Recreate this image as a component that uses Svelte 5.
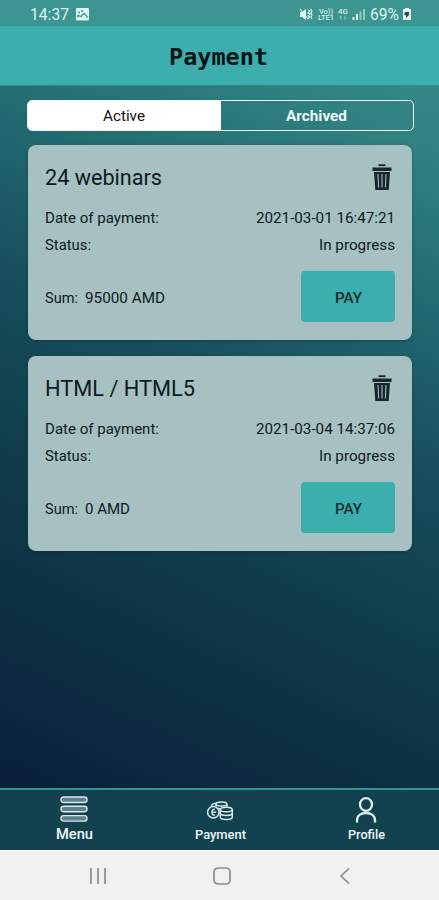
<script>
  const payments = [
    { title: '24 webinars', date: '2021-03-01 16:47:21', sum: '95000 AMD', titleWidth: 117, sumWidth: 80 },
    { title: 'HTML / HTML5', date: '2021-03-04 14:37:06', sum: '0 AMD', titleWidth: 150, sumWidth: 45 },
  ];
</script>

{#snippet label(text, width)}
  <svg class="label" style:width="{width}px" aria-label={text}>
    <text x="0" y="1em" textLength={width} lengthAdjust="spacingAndGlyphs">{text}</text>
  </svg>
{/snippet}

<div class="screen">
  <div class="status">
    <span class="time">{@render label('14:37', 39)}</span>
    <svg class="photo" width="13" height="13" viewBox="0 0 13 13">
      <rect width="13" height="12.5" rx="1" fill="#dff5f1" />
      <path d="M2 9.5V7.5l3 1 3-3 3 3v1.2M2 4.5h2M5 3h2" fill="none" stroke="#3c9490" stroke-width="1.3" />
    </svg>
    <svg class="signals" width="69" height="15" viewBox="0 0 69 15">
      <path d="M1 5h2l4-3v11l-4-3H1z" fill="#e4f6f3" />
      <path d="M1 2l8 10M9 3l2 1-2 2 2 1-2 2 2 1-2 2M12 2l1 2-1 2 1 2-1 2 1 2" fill="none" stroke="#dcf3f0" stroke-width="1.1" />
      <g fill="#d3edea" font-weight="500" font-size="6.3">
        <text x="20" y="6.7" textLength="14" lengthAdjust="spacingAndGlyphs">Vo))</text>
        <text x="19" y="13" textLength="16" lengthAdjust="spacingAndGlyphs">LTE1</text>
        <text x="39" y="6.7" textLength="10" lengthAdjust="spacingAndGlyphs">4G</text>
      </g>
      <path d="M42 13V9l-1.5 1.5M46 8.5v4l1.5-1.5" fill="none" stroke="#91c9c3" />
      <path d="M54.5 13v-3M58 13V7" stroke="#e6f5f2" stroke-width="2" />
      <path d="M61.5 13V4.500M65 13V2" stroke="#91c7c2" stroke-width="2" />
    </svg>
    <span class="percent">{@render label('69%', 29)}</span>
    <svg class="battery" width="10" height="13" viewBox="0 0 10 13">
      <path d="M3 0h4v1h2v11H1V1h2z" fill="#e2f6f3" />
      <path d="M3 4h4v3L4 10V7H2z" fill="#254f50" />
    </svg>
  </div>

  <header><h1>{@render label('Payment', 99)}</h1></header>

  <main>
    <div class="tabs">
      <button class="tab active">{@render label('Active', 42)}</button>
      <button class="tab">{@render label('Archived', 61)}</button>
    </div>
    {#each payments as payment}
      <section class="card">
        <div class="title-row">
          <h2>{@render label(payment.title, payment.titleWidth)}</h2>
          <svg class="trash" width="20" height="27" viewBox="0 0 20 27">
            <path d="M6.500 1.200h7" fill="none" stroke="#17252f" stroke-width="1.800" />
            <path d="M0.500 3.600h19v3.400H0.500zM2 8h16l-1.300 18H3.300z" fill="#17252f" />
            <path d="M6 10l.6 13.500M10 10v13.500M14 10l-.6 13.500" stroke="#94aeb2" stroke-width="1.200" />
          </svg>
        </div>
        <div class="detail">
          {@render label('Date of payment:', 114)}
          {@render label(payment.date, 139)}
        </div>
        <div class="detail">
          {@render label('Status:', 46)}
          {@render label('In progress', 76)}
        </div>
        <div class="sum-row">
          <div class="sum">{@render label('Sum:', 33)}{@render label(payment.sum, payment.sumWidth)}</div>
          <button class="pay">{@render label('PAY', 27)}</button>
        </div>
      </section>
    {/each}
  </main>

  <nav class="tabbar">
    <a class="item menu" href="#menu">
      <svg width="28" height="27" viewBox="0 0 28 27" fill="#5c7f8b" stroke="#d9e8ed" stroke-width="1.400">
        <rect x="1" y="1" width="26" height="5.500" rx="2.700" />
        <rect x="1" y="10.300" width="26" height="5.500" rx="2.700" />
        <rect x="1" y="19.600" width="26" height="5.500" rx="2.700" />
      </svg>
      {@render label('Menu', 37)}
    </a>
    <a class="item" href="#payment">
      <svg width="28" height="27" viewBox="0 0 28 27" fill="none" stroke="#d9e9ed" stroke-width="1.500">
        <circle cx="7.300" cy="16.300" r="5.700" />
        <path d="M8.800 13.300c-3.800 0-3.800 6 0 6M7.300 16.300h3M5 9.800C6.500 7.800 8 7.300 10 7.300" />
        <path d="M10 10.500V8.200c0-3 11-3 11 0v2.600M10 8.200c0 2.300 11 2.300 11 0M11.500 12c1 .7 2 .9 3 .9" />
        <path fill="#12424f" d="M14.300 13.800v7.200c0 3.400 12 3.400 12 0v-7.200c0-3.300-12-3.300-12 0z" />
        <path d="M14.300 13.800c0 2.700 12 2.700 12 0M14.300 17.300c0 2.800 12 2.800 12 0" />
      </svg>
      {@render label('Payment', 51)}
    </a>
    <a class="item" href="#profile">
      <svg width="28" height="27" viewBox="0 0 28 27" fill="none" stroke="#e0edf1" stroke-width="2.300">
        <ellipse cx="14" cy="8.500" rx="6" ry="6.300" />
        <path d="M5 26.500v-2c0-5 4-7.500 9-7.500s9 2.500 9 7.500v2" />
      </svg>
      {@render label('Profile', 37)}
    </a>
  </nav>

  <div class="system">
    <svg width="18" height="18" viewBox="0 0 18 18"><path d="M2 1v16M9 1v16M16 1v16" /></svg>
    <svg width="18" height="18" viewBox="0 0 18 18"><rect x="1" y="1" width="16" height="16" rx="4" /></svg>
    <svg width="18" height="18" viewBox="0 0 18 18"><path d="M13 1.500L5 9l8 7.500" /></svg>
  </div>
</div>

<style>
  :global(body) { margin: 0; }
  .screen {
    width: 439px;
    height: 900px;
    box-sizing: border-box;
    display: flex;
    flex-direction: column;
    overflow: hidden;
    font-family: Roboto, sans-serif;
    color: #0c1a1f;
    background: linear-gradient(205deg, #3a918c 0%, #308080 15%, #216970 29%, #184e5c 43%, #113f4c 57%, #0e3244 70%, #0b283e 82%, #071e36 91%);
  }
  svg { display: block; flex: none; }
  .label { height: 1.3em; overflow: visible; fill: currentColor; stroke: none; }
  .status { height: 26px; flex: none; display: flex; align-items: center; background: #3d9591; color: #def4f1; box-sizing: border-box; padding: 2px 27px 0 30px; font-size: 16px; }
  .time, .percent { font-size: 16px; }
  .photo { margin-left: 7px; }
  .signals { margin-left: auto; }
  .percent { margin-left: 2px; }
  .battery { margin-left: 3px; }
  header { height: 60px; flex: none; display: flex; align-items: center; justify-content: center; background: #3caeae; border-bottom: 1px solid #32888a; box-sizing: border-box; color: #071316; }
  h1, h2 { margin: 0; font-weight: 400; }
  h1 { font: 700 23px 'DejaVu Sans Mono', monospace; margin: 2px 0 0 -3px; }
  main { flex: 1; padding: 14px 27px 0 28px; }
  .tabs { width: 387px; height: 31px; box-sizing: border-box; border: 1.500px solid #e8f7f6; border-radius: 5px; display: flex; overflow: hidden; margin-left: -1px; }
  button { border: 0; margin: 0; padding: 0; font-family: inherit; background: none; display: flex; align-items: center; justify-content: center; }
  .tab { flex: 1; font-size: 15px; font-weight: 700; color: #edf9fa; padding-top: 1px; }
  .tab.active { font-weight: 400; color: #111; background: #fff; }
  .card { height: 195px; width: 384px; box-sizing: border-box; background: #a7c0c1; border-radius: 8px; padding: 17px 17px 0; margin-top: 14px; box-shadow: 0 1px 3px #0b303b80; }
  .card + .card { margin-top: 16px; }
  .title-row { height: 30px; display: flex; align-items: center; justify-content: space-between; font-size: 22px; }
  h2 { font-size: 22px; }
  .trash { margin-right: 3px; }
  .detail { height: 27px; display: flex; align-items: center; justify-content: space-between; font-size: 15px; }
  .title-row + .detail { margin-top: 12px; }
  .sum-row { display: flex; align-items: center; justify-content: space-between; margin-top: 13px; font-size: 15px; }
  .sum { display: flex; gap: 7px; padding-top: 2px; }
  .pay { width: 94px; height: 51px; border-radius: 4px; background: #3baeae; color: #142c31; font-size: 15px; font-weight: 500; padding-top: 2px; }
  .tabbar { height: 62px; flex: none; box-sizing: border-box; border-top: 2px solid #369194; background: #12424f; display: flex; padding-left: 1px; }
  .item { flex: 1; display: flex; flex-direction: column; align-items: center; padding-top: 6px; color: #eff8fa; font-size: 13px; font-weight: 500; gap: 3px; text-decoration: none; }
  .item.menu { font-size: 15px; gap: 1px; }
  .system { height: 50px; flex: none; display: flex; align-items: center; justify-content: space-between; background: #f1f1f1; padding: 0 85px 0 89px; border-top: 1px solid #fff; box-sizing: border-box; }
  .system svg { fill: none; stroke: #8c8c8c; stroke-width: 1.700; }
</style>
